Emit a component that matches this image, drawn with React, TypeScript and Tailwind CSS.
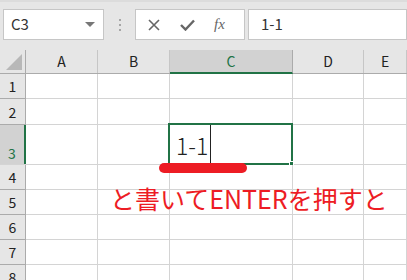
import React from "react";

const cols = [
  { name: "A", w: "w-[72px]" },
  { name: "B", w: "w-[72px]" },
  { name: "C", w: "w-[123px]" },
  { name: "D", w: "w-[71px]" },
  { name: "E", w: "flex-1" },
];

const rows = [
  { n: 1, h: "h-[25px]" },
  { n: 2, h: "h-[26px]" },
  { n: 3, h: "h-[40px]" },
  { n: 4, h: "h-[25px]" },
  { n: 5, h: "h-[25px]" },
  { n: 6, h: "h-[25px]" },
  { n: 7, h: "h-[25px]" },
  { n: 8, h: "h-[25px]" },
];

const font = { fontFamily: "'Noto Sans CJK JP', 'Noto Sans', sans-serif" };

export default function App() {
  return (
    <div className="relative w-[407px] h-[280px] overflow-hidden bg-white text-[#262626]" style={font}>
      {/* formula bar */}
      <div className="h-[50px] bg-[#e6e6e6] border-t-2 border-[#dcdcdc] flex items-start pt-[7px] pl-[3px]">
        <div className="w-[101px] h-[31px] bg-white border border-[#c6c6c6] flex items-center justify-between pl-[7px] pr-[8px]">
          <span className="text-[15px] text-[#333]">C3</span>
          <svg width="10" height="6" viewBox="0 0 10 6"><path d="M0 0h10L5 5z" fill="#777" /></svg>
        </div>
        <div className="w-[31px] h-[31px] flex flex-col items-center justify-center gap-[3px]">
          <span className="w-[2px] h-[2px] bg-[#a6a6a6]" />
          <span className="w-[2px] h-[2px] bg-[#a6a6a6]" />
          <span className="w-[2px] h-[2px] bg-[#a6a6a6]" />
        </div>
        <div className="w-[110px] h-[31px] bg-white border border-[#c6c6c6] flex items-center pl-[12px] gap-[20px]">
          <svg width="12" height="12" viewBox="0 0 12 12"><path d="M1 1l10 10M11 1L1 11" stroke="#666" strokeWidth="1.6" /></svg>
          <svg width="15" height="12" viewBox="0 0 15 12"><path d="M1 6l4.5 4.5L14 1.5" stroke="#666" strokeWidth="2.4" fill="none" /></svg>
          <span className="text-[15px] italic text-[#666] -ml-[1px]" style={{ fontFamily: "'Liberation Serif', serif" }}>fx</span>
        </div>
        <div className="ml-[3px] flex-1 h-[31px] bg-white border border-[#c6c6c6] flex items-center pl-[12px]">
          <span className="text-[15px] text-[#333]">1-1</span>
        </div>
      </div>

      {/* column headers */}
      <div className="flex h-[24px] bg-[#e6e6e6] border-b border-[#ababab]">
        <div className="w-[26px] border-r border-[#ababab] relative">
          <svg className="absolute right-[3px] bottom-[3px]" width="16" height="16" viewBox="0 0 16 16"><path d="M16 0V16H0z" fill="#b8b8b8" /></svg>
        </div>
        {cols.map((c) =>
          c.name === "C" ? (
            <div key={c.name} className={`${c.w} bg-[#d2d2d2] border-r border-[#ababab] border-b-2 border-b-[#217346] -mb-px flex items-center justify-center text-[14px] text-[#217346]`}>
              {c.name}
            </div>
          ) : (
            <div key={c.name} className={`${c.w} border-r border-[#c6c6c6] flex items-center justify-center text-[14px] text-[#222]`}>
              {c.name}
            </div>
          )
        )}
      </div>

      {/* grid rows */}
      {rows.map((r) => (
        <div key={r.n} className={`flex ${r.h} border-b border-[#d4d4d4]`}>
          {r.n === 3 ? (
            <div className="w-[26px] bg-[#d2d2d2] border-r-2 border-[#217346] flex items-end justify-center pb-[4px] text-[14px] text-[#217346] leading-none">
              {r.n}
            </div>
          ) : (
            <div className="w-[26px] bg-[#e6e6e6] border-r border-[#ababab] flex items-center justify-center text-[14px] text-[#222] leading-none -mb-px border-b border-b-[#ababab]">
              {r.n}
            </div>
          )}
          {cols.map((c) => (
            <div key={c.name} className={`${c.w} border-r border-[#d4d4d4] relative`}>
              {r.n === 3 && c.name === "C" && (
                <div className="absolute -left-[2px] -top-[2px] -right-[1px] -bottom-[1px] border-2 border-[#217346] bg-white flex items-center pl-[6px]">
                  <span className="text-[23px] font-light leading-none text-[#222] pt-[3px]">1-1</span>
                  <span className="ml-[2px] w-px h-[38px] bg-[#222]" />
                  <span className="absolute -right-[3px] -bottom-[3px] w-[5px] h-[5px] bg-[#217346] border border-white" />
                </div>
              )}
            </div>
          ))}
        </div>
      ))}

      {/* annotations */}
      <div className="absolute left-[159px] top-[163px] w-[88px] h-[10px] rounded-full bg-[#ed1c24]" />
      <div className="absolute left-[110px] top-[186px] text-[25px] leading-none text-[#ed1c24] whitespace-nowrap">
        と書いてENTERを押すと
      </div>
    </div>
  );
}
